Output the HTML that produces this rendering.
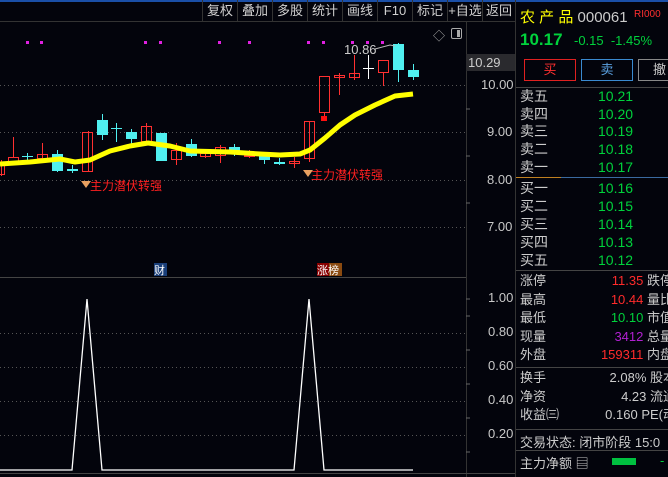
<!DOCTYPE html>
<html><head><meta charset="utf-8"><style>
*{margin:0;padding:0;box-sizing:border-box}
body{width:668px;height:477px;background:#03040c;overflow:hidden;position:relative;font-family:"Liberation Sans","Noto Sans CJK SC",sans-serif;color:#c8c8c8}
.a{position:absolute;white-space:nowrap}
.tb{position:absolute;top:0;height:21px;border-left:1px solid #333;font-size:13px;color:#d0d0d0;text-align:center;line-height:21px}
.r{font-size:13px}
.g{color:#00d23c}.rd{color:#ff2b2b}
</style></head><body>
<div class="a" style="left:0;top:0;width:668px;height:2px;background:#1a4fa8"></div>
<div class="a" style="left:0;top:21px;width:515px;height:1px;background:#333"></div>
<div class="tb" style="left:202px;width:35px">复权</div>
<div class="tb" style="left:237px;width:35px">叠加</div>
<div class="tb" style="left:272px;width:35px">多股</div>
<div class="tb" style="left:307px;width:35px">统计</div>
<div class="tb" style="left:342px;width:35px">画线</div>
<div class="tb" style="left:377px;width:35px">F10</div>
<div class="tb" style="left:412px;width:35px">标记</div>
<div class="tb" style="left:447px;width:35px">+自选</div>
<div class="tb" style="left:482px;width:33px">返回</div>
<div class="a" style="left:466px;top:22px;width:1px;height:455px;background:#333"></div>
<div class="a" style="left:515px;top:0;width:1px;height:477px;background:#333"></div>
<svg class="a" style="left:0;top:0" width="515" height="477">
<g stroke="#555" stroke-dasharray="1,3" stroke-width="1">
<line x1="0" y1="85.5" x2="466" y2="85.5"/><line x1="0" y1="132.5" x2="466" y2="132.5"/><line x1="0" y1="180.5" x2="466" y2="180.5"/><line x1="0" y1="227.5" x2="466" y2="227.5"/>
<line x1="0" y1="333.5" x2="466" y2="333.5"/><line x1="0" y1="367.5" x2="466" y2="367.5"/><line x1="0" y1="401.5" x2="466" y2="401.5"/><line x1="0" y1="435.5" x2="466" y2="435.5"/>
</g>
<line x1="0" y1="277.5" x2="466" y2="277.5" stroke="#444"/>
<line x1="0" y1="473.5" x2="515" y2="473.5" stroke="#444"/>
<g stroke="#666"><line x1="466" y1="61" x2="470" y2="61"/><line x1="466" y1="109" x2="470" y2="109"/><line x1="466" y1="156" x2="470" y2="156"/><line x1="466" y1="203" x2="470" y2="203"/>
<line x1="466" y1="299" x2="470" y2="299"/><line x1="466" y1="316" x2="470" y2="316"/><line x1="466" y1="350" x2="470" y2="350"/><line x1="466" y1="384" x2="470" y2="384"/><line x1="466" y1="418" x2="470" y2="418"/><line x1="466" y1="452" x2="470" y2="452"/></g>
<g fill="#e020e0"><rect x="26" y="41" width="3" height="3"/><rect x="40" y="41" width="3" height="3"/><rect x="144" y="41" width="3" height="3"/><rect x="159" y="41" width="3" height="3"/><rect x="218" y="41" width="3" height="3"/><rect x="248" y="41" width="3" height="3"/><rect x="307" y="41" width="3" height="3"/><rect x="322" y="41" width="3" height="3"/><rect x="351" y="41" width="3" height="3"/><rect x="366" y="41" width="3" height="3"/><rect x="381" y="41" width="3" height="3"/></g>
<g stroke-width="1">
<g stroke="#ff3030" fill="none">
<line x1="1.5" y1="160" x2="1.5" y2="176"/><rect x="-4.5" y="163.5" width="9" height="11"/>
<line x1="13.5" y1="137" x2="13.5" y2="157"/><rect x="8.5" y="157.5" width="10" height="5"/>
<line x1="42.5" y1="143" x2="42.5" y2="163"/><rect x="37.5" y="154.5" width="10" height="4"/>
<line x1="88.5" y1="131" x2="88.5" y2="172"/><rect x="82.5" y="132.5" width="10" height="39"/>
<line x1="146.5" y1="123" x2="146.5" y2="142"/><rect x="141.5" y="126.5" width="10" height="15"/>
<line x1="176.5" y1="143" x2="176.5" y2="165"/><rect x="171.5" y="150.5" width="10" height="9"/>
<line x1="205.5" y1="150" x2="205.5" y2="158"/><rect x="200.5" y="153.5" width="10" height="3"/>
<line x1="220.5" y1="145" x2="220.5" y2="163"/><rect x="215.5" y="147.5" width="10" height="8"/>
<line x1="249.5" y1="150" x2="249.5" y2="158"/><rect x="244.5" y="155.5" width="10" height="1"/>
<line x1="294.5" y1="157" x2="294.5" y2="168"/><rect x="289.5" y="161.5" width="10" height="2"/>
<line x1="309.5" y1="121" x2="309.5" y2="162"/><rect x="304.5" y="121.5" width="10" height="37"/>
<rect x="319.5" y="76.5" width="10" height="36"/><line x1="324.5" y1="112" x2="324.5" y2="117"/>
<line x1="339.5" y1="73" x2="339.5" y2="95"/><rect x="334.5" y="75.5" width="10" height="2"/>
<line x1="354.5" y1="55" x2="354.5" y2="80"/><rect x="349.5" y="73.5" width="10" height="4"/>
<line x1="383.5" y1="72" x2="383.5" y2="86"/><rect x="378.5" y="60.5" width="10" height="12"/>
</g>
<rect x="321" y="116" width="6" height="5" fill="#ff1010"/>
<g stroke="#50f0f0" fill="#50f0f0">
<line x1="27.5" y1="153" x2="27.5" y2="163"/><line x1="22" y1="156.5" x2="33" y2="156.5"/>
<line x1="57.5" y1="150" x2="57.5" y2="172"/><rect x="52.5" y="154.5" width="10" height="16"/>
<line x1="72.5" y1="165" x2="72.5" y2="173"/><rect x="67.5" y="169.5" width="10" height="1"/>
<line x1="102.5" y1="114" x2="102.5" y2="140"/><rect x="97.5" y="120.5" width="10" height="14"/>
<line x1="116.5" y1="123" x2="116.5" y2="142"/><line x1="111" y1="128.5" x2="122" y2="128.5"/>
<line x1="131.5" y1="129" x2="131.5" y2="144"/><rect x="126.5" y="132.5" width="10" height="6"/>
<rect x="156.5" y="133.5" width="10" height="27"/>
<line x1="191.5" y1="139" x2="191.5" y2="157"/><rect x="186.5" y="144.5" width="10" height="11"/>
<line x1="234.5" y1="144" x2="234.5" y2="156"/><rect x="229.5" y="147.5" width="10" height="4"/>
<line x1="264.5" y1="153" x2="264.5" y2="164"/><rect x="259.5" y="156.5" width="10" height="3"/>
<line x1="279.5" y1="158" x2="279.5" y2="165"/><rect x="274.5" y="162.5" width="10" height="1"/>
<line x1="398.5" y1="43" x2="398.5" y2="82"/><rect x="393.5" y="44.5" width="10" height="25"/>
<line x1="413.5" y1="64" x2="413.5" y2="80"/><rect x="408.5" y="70.5" width="10" height="6"/>
</g>
<g stroke="#fff"><line x1="368.5" y1="55" x2="368.5" y2="79"/><line x1="363" y1="68.5" x2="374" y2="68.5"/></g>
</g>
<polyline fill="none" stroke="#ffff00" stroke-width="5" stroke-linejoin="round" points="0,164 30,162 60,159 75,162 90,160 110,151 130,146 148,143 170,146 190,151 230,152 260,154 280,155 300,154 310,150 325,138 340,125 355,115 375,105 395,96 413,94"/>
<polyline fill="none" stroke="#bbb" stroke-width="1" points="375,49 390,45 395,46"/>
<polyline fill="none" stroke="#fff" stroke-width="1.3" points="0,470 72,470 87,299 102,470 294,470 309,299 324,470 413,470"/>
<path d="M81 181 l10 0 l-5 7z" fill="#e8a060"/><path d="M303 170 l10 0 l-5 7z" fill="#e8a060"/>
<rect x="154" y="263" width="13" height="13" fill="#1a3f7a"/><rect x="317" y="263" width="12" height="13" fill="#800"/><rect x="329" y="263" width="13" height="13" fill="#8a4a10"/>
</svg>
<div class="a" style="left:344px;top:42px;font-size:13px;color:#ccc">10.86</div>
<div class="a" style="left:90px;top:177px;font-size:12px;color:#ff2020">主力潜伏转强</div>
<div class="a" style="left:311px;top:166px;font-size:12px;color:#ff2020">主力潜伏转强</div>
<div class="a" style="left:154px;top:262px;font-size:11px;color:#fff">财</div>
<div class="a" style="left:317px;top:262px;font-size:11px;color:#fff">涨榜</div>
<div class="a" style="left:433px;top:27px;font-size:12px;color:#aaa">◇</div>
<div class="a" style="left:451px;top:28px;width:11px;height:11px;border:1px solid #aaa;border-radius:2px"><div style="position:absolute;right:1px;top:1px;width:3px;height:7px;background:#aaa"></div></div>
<div class="a" style="left:466px;top:54px;width:49px;height:17px;background:#2a2a2e"></div>
<div class="a" style="left:468px;top:55px;font-size:13px;color:#ccc">10.29</div>
<div class="a r" style="left:481px;top:77px">10.00</div>
<div class="a r" style="left:487px;top:124px">9.00</div>
<div class="a r" style="left:487px;top:172px">8.00</div>
<div class="a r" style="left:487px;top:219px">7.00</div>
<div class="a r" style="left:488px;top:290px">1.00</div>
<div class="a r" style="left:488px;top:324px">0.80</div>
<div class="a r" style="left:488px;top:358px">0.60</div>
<div class="a r" style="left:488px;top:392px">0.40</div>
<div class="a r" style="left:488px;top:426px">0.20</div>
<div class="a" style="left:520px;top:6px;font-size:15px;color:#ffff00">农 产 品 <span style="color:#ccc">000061</span></div>
<div class="a" style="left:634px;top:9px;font-size:10px;color:#ff3030">RI000</div>
<div class="a g" style="left:520px;top:30px;font-size:17px;font-weight:bold">10.17</div>
<div class="a g" style="left:574px;top:33px;font-size:13px">-0.15 &nbsp;-1.45%</div>
<div class="a" style="left:524px;top:59px;width:52px;height:22px;border:1px solid #e02020;color:#ff3030;font-size:13px;text-align:center;line-height:20px">买</div>
<div class="a" style="left:581px;top:59px;width:52px;height:22px;border:1px solid #3a8ad0;color:#5aa0e0;font-size:13px;text-align:center;line-height:20px">卖</div>
<div class="a" style="left:638px;top:59px;width:40px;height:22px;border:1px solid #888;color:#ccc;font-size:13px;line-height:20px;padding-left:14px">撤</div>
<div class="a" style="left:516px;top:87px;width:152px;height:1px;background:#444"></div>
<div class="a" style="left:516px;top:177px;width:45px;height:1px;background:#c08020"></div>
<div class="a" style="left:561px;top:177px;width:107px;height:1px;background:#3a6aa0"></div>
<div class="a" style="left:516px;top:270px;width:152px;height:1px;background:#444"></div>
<div class="a" style="left:516px;top:367px;width:152px;height:1px;background:#444"></div>
<div class="a" style="left:516px;top:429px;width:152px;height:1px;background:#444"></div>
<div class="a" style="left:516px;top:450px;width:152px;height:1px;background:#444"></div>
<div class="a" style="left:520px;top:88px;font-size:14px;line-height:17.7px;color:#ccc">卖五<br>卖四<br>卖三<br>卖二<br>卖一</div>
<div class="a g" style="left:598px;top:88px;font-size:14px;line-height:17.7px">10.21<br>10.20<br>10.19<br>10.18<br>10.17</div>
<div class="a" style="left:520px;top:179px;font-size:14px;line-height:18px;color:#ccc">买一<br>买二<br>买三<br>买四<br>买五</div>
<div class="a g" style="left:598px;top:179px;font-size:14px;line-height:18px">10.16<br>10.15<br>10.14<br>10.13<br>10.12</div>
<div class="a" style="left:520px;top:272px;font-size:13px;line-height:18.6px;color:#ccc">涨停<br>最高<br>最低<br>现量<br>外盘</div>
<div class="a" style="left:560px;top:272px;width:113px;font-size:13px;line-height:18.6px;text-align:right"><span class="rd">11.35</span> 跌停<br><span class="rd">10.44</span> 量比<br><span class="g">10.10</span> 市值<br><span style="color:#b020d0">3412</span> 总量<br><span class="rd">159311</span> 内盘</div>
<div class="a" style="left:520px;top:369px;font-size:13px;line-height:18.6px;color:#ccc">换手<br>净资<br>收益㈢</div>
<div class="a" style="left:560px;top:369px;width:116px;font-size:13px;line-height:18.6px;text-align:right;color:#ccc">2.08% 股本<br>4.23 流通<br>0.160 PE(动</div>
<div class="a" style="left:520px;top:432px;font-size:13px;color:#ccc">交易状态: 闭市阶段 15:0</div>
<div class="a" style="left:520px;top:453px;font-size:13px;color:#ccc">主力净额 ▤</div>
<div class="a" style="left:612px;top:458px;width:24px;height:7px;background:#00c040"></div>
<div class="a g" style="left:660px;top:453px;font-size:13px">-</div>
</body></html>
